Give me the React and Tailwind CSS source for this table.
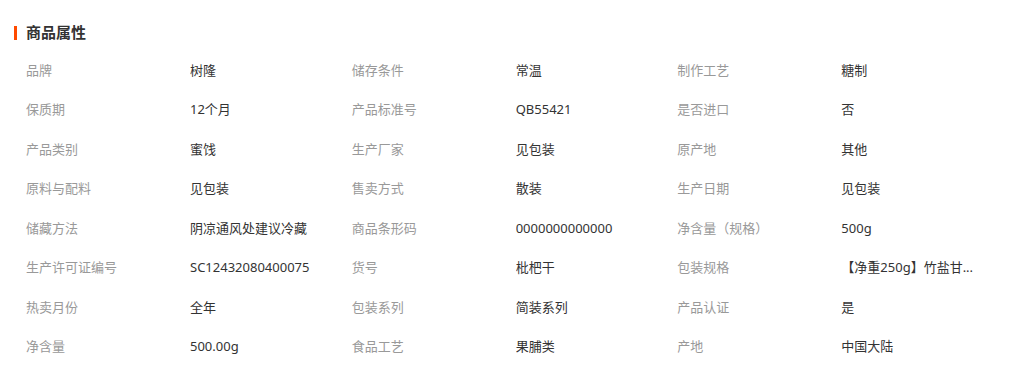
const attrs = [
  ['品牌', '树隆'],
  ['储存条件', '常温'],
  ['制作工艺', '糖制'],
  ['保质期', '12个月'],
  ['产品标准号', 'QB55421'],
  ['是否进口', '否'],
  ['产品类别', '蜜饯'],
  ['生产厂家', '见包装'],
  ['原产地', '其他'],
  ['原料与配料', '见包装'],
  ['售卖方式', '散装'],
  ['生产日期', '见包装'],
  ['储藏方法', '阴凉通风处建议冷藏'],
  ['商品条形码', '0000000000000'],
  ['净含量（规格）', '500g'],
  ['生产许可证编号', 'SC12432080400075'],
  ['货号', '枇杷干'],
  ['包装规格', '【净重250g】竹盐甘...'],
  ['热卖月份', '全年'],
  ['包装系列', '简装系列'],
  ['产品认证', '是'],
  ['净含量', '500.00g'],
  ['食品工艺', '果脯类'],
  ['产地', '中国大陆'],
];

export default function App() {
  return (
    <div
      className="w-[1024px] h-[365px] bg-white overflow-hidden"
      style={{ fontFamily: '"Noto Sans", "Noto Sans CJK SC", sans-serif' }}
    >
      <div className="pt-[26px] pl-[14px] flex items-center h-[40px]">
        <span className="w-[3px] h-[14px] bg-[#ff4a00] mr-[9px]" />
        <h2 className="text-[15px] font-bold text-[#333] leading-[15px] -mt-[2px]">商品属性</h2>
      </div>

      <div className="ml-[26px] mt-[11px] w-[977px] grid grid-cols-3">
        {attrs.map(([label, value]) => (
          <div key={label} className="grid grid-cols-[164px_1fr] h-[39.45px] items-center text-[13px]">
            <span className="text-[#999]">{label}</span>
            <span className="text-[#333] truncate">{value}</span>
          </div>
        ))}
      </div>
    </div>
  );
}
